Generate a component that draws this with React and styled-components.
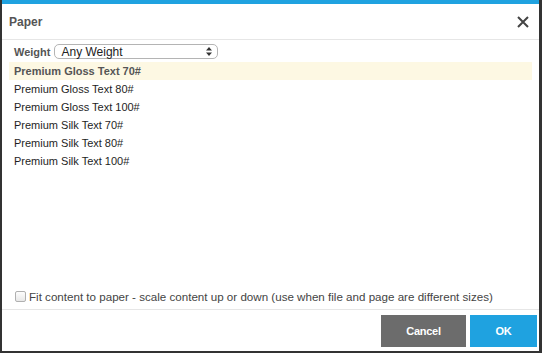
import * as React from "react"
import styled, { createGlobalStyle } from "styled-components"

const Global = createGlobalStyle`
  html, body {
    margin: 0;
    padding: 0;
    background: #333;
    font-family: "Liberation Sans", Arial, sans-serif;
  }
`

const Dialog = styled.div`
  margin: 0 3px 0 2px;
  height: 347px;
  background: #fff;
  border-top: 4px solid #1fa2e0;
  display: flex;
  flex-direction: column;
`

const Header = styled.div`
  height: 34px;
  display: flex;
  align-items: center;
  justify-content: space-between;
  padding: 1px 10px 0 7px;
  border-bottom: 1px solid #e6e6e6;
`

const Title = styled.h1`
  margin: 0;
  font-size: 12px;
  font-weight: bold;
  color: #555;
`

const Close = styled.button`
  border: 0;
  background: none;
  padding: 0;
  display: flex;
  cursor: pointer;
`

const Content = styled.div`
  flex: 1;
  padding: 3px 7px 0 7px;
  display: flex;
  flex-direction: column;
`

const FilterRow = styled.div`
  display: flex;
  align-items: center;
  gap: 4px;
  height: 17px;
  padding-left: 5px;
`

const Label = styled.span`
  font-size: 11px;
  font-weight: bold;
  color: #555;
`

const Select = styled.div`
  width: 164px;
  height: 15px;
  box-sizing: border-box;
  border: 1px solid #b4b4b4;
  border-radius: 5px;
  display: flex;
  align-items: center;
  justify-content: space-between;
  padding: 0 5px 0 6px;
  font-size: 12px;
  color: #222;
`

const List = styled.ul`
  list-style: none;
  margin: 2px 0 0;
  padding: 0;
`

const Item = styled.li`
  height: 18px;
  line-height: 18px;
  padding-left: 5px;
  font-size: 11px;
  color: ${p => (p.$active ? "#555" : "#1e1e1e")};
  font-weight: ${p => (p.$active ? "bold" : "normal")};
  background: ${p => (p.$active ? "#fdf8e3" : "transparent")};
`

const FitRow = styled.label`
  display: flex;
  align-items: center;
  gap: 3px;
  padding: 0 0 6px 13px;
  font-size: 11.6px;
  color: #444;
`

const Box = styled.span`
  width: 9px;
  height: 9px;
  border: 1px solid #b0b0b0;
  border-radius: 2px;
  background: linear-gradient(#fdfdfd, #e8e8e8);
`

const Footer = styled.div`
  border-top: 1px solid #e6e6e6;
  padding: 5px 2px 4px 0;
  display: flex;
  justify-content: flex-end;
  gap: 4px;
`

const Button = styled.button`
  height: 32px;
  width: ${p => p.$w}px;
  border: 0;
  color: #fff;
  font-family: "Liberation Sans", Arial, sans-serif;
  font-size: 11px;
  font-weight: bold;
  letter-spacing: -0.3px;
  background: ${p => (p.$primary ? "#1fa2e0" : "#6c6c6c")};
`

const papers = [
  "Premium Gloss Text 70#",
  "Premium Gloss Text 80#",
  "Premium Gloss Text 100#",
  "Premium Silk Text 70#",
  "Premium Silk Text 80#",
  "Premium Silk Text 100#",
]

const App = () => (
  <>
    <Global />
    <Dialog>
      <Header>
        <Title>Paper</Title>
        <Close>
          <svg width="12" height="12" viewBox="0 0 12 12">
            <path d="M1 1L11 11M11 1L1 11" stroke="#444" strokeWidth="2" />
          </svg>
        </Close>
      </Header>
      <Content>
        <FilterRow>
          <Label>Weight</Label>
          <Select>
            <span>Any Weight</span>
            <svg width="6" height="9" viewBox="0 0 6 9">
              <path d="M0 3.5L3 0L6 3.5Z M0 5.5L3 9L6 5.5Z" fill="#333" />
            </svg>
          </Select>
        </FilterRow>
        <List>
          {papers.map((name, i) => (
            <Item key={name} $active={i === 0}>{name}</Item>
          ))}
        </List>
      </Content>
      <FitRow>
        <Box />
        Fit content to paper - scale content up or down (use when file and page are different sizes)
      </FitRow>
      <Footer>
        <Button $w={85}>Cancel</Button>
        <Button $w={67} $primary>OK</Button>
      </Footer>
    </Dialog>
  </>
)

export default App
